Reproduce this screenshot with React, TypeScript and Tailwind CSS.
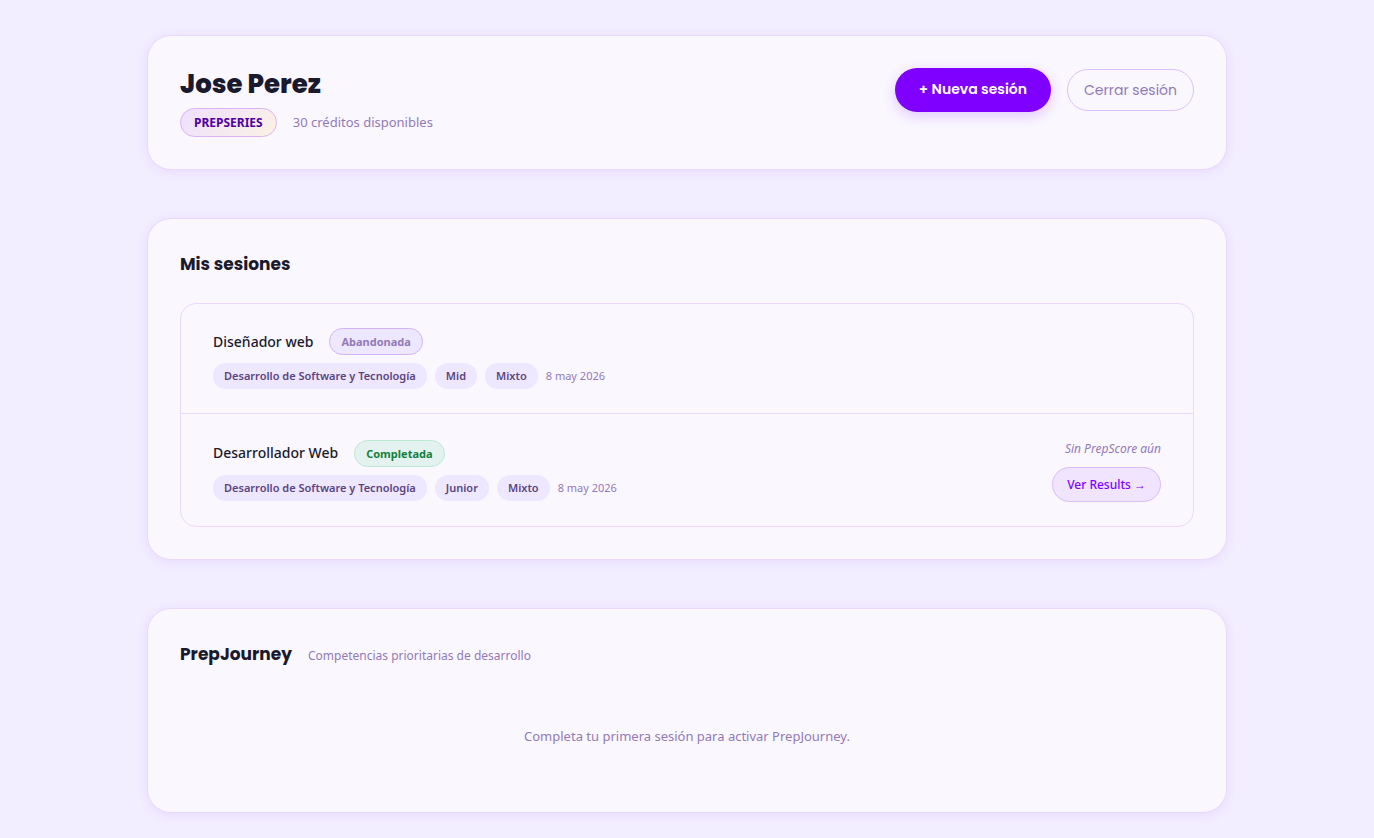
import type { ReactNode } from "react";

type Session = {
  id: number;
  title: string;
  status: "Abandonada" | "Completada";
  tags: string[];
  date: string;
};

const sessions: Session[] = [
  {
    id: 1,
    title: "Diseñador web",
    status: "Abandonada",
    tags: ["Desarrollo de Software y Tecnología", "Mid", "Mixto"],
    date: "8 may 2026",
  },
  {
    id: 2,
    title: "Desarrollador Web",
    status: "Completada",
    tags: ["Desarrollo de Software y Tecnología", "Junior", "Mixto"],
    date: "8 may 2026",
  },
];

const statusStyles = {
  Abandonada: "border-[#d3b3fb] bg-[#ede7ff] text-[#927bb5]",
  Completada: "border-[#bfe8d4] bg-[#e3f2ee] text-[#15803d]",
};

function Card({ children }: { children: ReactNode }) {
  return (
    <section className="rounded-3xl border border-[#ead9fe] bg-[#faf7ff] p-8 shadow-[0_2px_12px_rgba(128,0,255,0.08)]">
      {children}
    </section>
  );
}

function SectionTitle({ children }: { children: ReactNode }) {
  return (
    <h2 className="font-[Poppins,sans-serif] text-[17px] leading-[26px] font-bold text-[#1a1a2e]">
      {children}
    </h2>
  );
}

function SessionRow({ session }: { session: Session }) {
  return (
    <li className="flex items-center justify-between gap-6 px-8 py-6">
      <div className="flex flex-col gap-2">
        <div className="flex items-center gap-4">
          <h3 className="text-sm font-medium text-[#1a1a2e]">{session.title}</h3>
          <span
            className={`rounded-full border px-[11px] text-[11px] leading-[25px] font-bold ${statusStyles[session.status]}`}
          >
            {session.status}
          </span>
        </div>
        <div className="flex flex-wrap items-center gap-2 text-[11px] leading-[26px]">
          {session.tags.map((tag) => (
            <span key={tag} className="rounded-full bg-[#ede7ff] px-[11px] font-semibold text-[#5b4580]">
              {tag}
            </span>
          ))}
          <span className="text-[#927bb5]">{session.date}</span>
        </div>
      </div>

      {session.status === "Completada" && (
        <div className="flex flex-col items-end gap-2">
          <span className="text-xs leading-[21px] text-[#927bb5] italic">Sin PrepScore aún</span>
          <a
            href="#results"
            className="rounded-full border border-[#d9bdfc] bg-[#f0e4ff] px-[14px] text-xs leading-[33px] font-medium text-[#8000ff]"
          >
            Ver Results →
          </a>
        </div>
      )}
    </li>
  );
}

export default function App() {
  return (
    <div className="min-h-screen bg-[#f2edff] px-6 pt-[35px] pb-[25px] font-['Segoe_UI','Noto_Sans',sans-serif]">
      <main className="mx-auto flex max-w-[1080px] flex-col gap-12">
        <Card>
          <div className="flex items-start justify-between gap-6">
            <div>
              <h1 className="font-[Poppins,sans-serif] text-[26px] leading-8 font-extrabold text-[#1a1a2e]">
                Jose Perez
              </h1>
              <div className="mt-2 flex items-center gap-4">
                <span className="rounded-full border border-[#d9b5f5] bg-linear-135 from-[#efdfff] to-[#fbf2e3] px-[13px] text-xs leading-[27px] font-bold text-[#5000a0]">
                  PREPSERIES
                </span>
                <span className="text-[13px] text-[#927bb5]">30 créditos disponibles</span>
              </div>
            </div>

            <div className="flex items-center gap-4 font-[Poppins,sans-serif] text-sm">
              <button
                type="button"
                className="rounded-full bg-[#8000ff] px-6 pb-0.5 leading-[42px] font-semibold text-white shadow-[0_4px_14px_rgba(128,0,255,0.2)]"
              >
                + Nueva sesión
              </button>
              <button
                type="button"
                className="rounded-full border border-[#dcc2fd] px-4 leading-10 text-[#927bb5]"
              >
                Cerrar sesión
              </button>
            </div>
          </div>
        </Card>

        <Card>
          <SectionTitle>Mis sesiones</SectionTitle>
          <ul className="mt-[26px] divide-y divide-[#ead9fe] rounded-2xl border border-[#ead9fe]">
            {sessions.map((session) => (
              <SessionRow key={session.id} session={session} />
            ))}
          </ul>
        </Card>

        <Card>
          <div className="flex items-baseline gap-4">
            <SectionTitle>PrepJourney</SectionTitle>
            <span className="text-xs text-[#927bb5]">Competencias prioritarias de desarrollo</span>
          </div>
          <p className="mt-[26px] py-8 text-center text-[13px] leading-[23px] text-[#927bb5]">
            Completa tu primera sesión para activar PrepJourney.
          </p>
        </Card>
      </main>
    </div>
  );
}
